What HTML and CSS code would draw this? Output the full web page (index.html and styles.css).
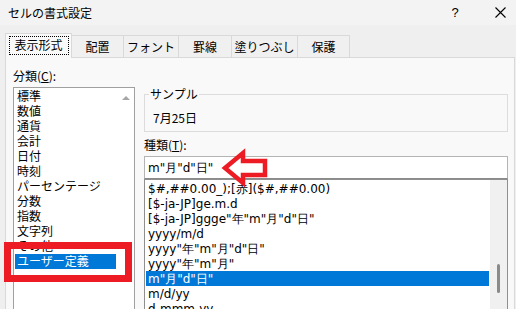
FILE: index.html
```html
<!DOCTYPE html>
<html>
<head>
<meta charset="utf-8">
<title>Format Cells</title>
<link rel="stylesheet" href="styles.css">
</head>
<body>
<div class="dialog">
  <div class="titlebar">
    <span class="title">セルの書式設定</span>
    <div class="caption-buttons">
      <span class="cap-btn help">?</span>
      <span class="cap-btn close">
        <svg width="11" height="11" viewBox="0 0 11 11"><path d="M0.5 0.5 L10.5 10.5 M10.5 0.5 L0.5 10.5" stroke="#000" stroke-width="1.1" fill="none"/></svg>
      </span>
    </div>
  </div>

  <div class="tabs">
    <div class="tab tab-1 selected"><span class="focus">表示形式</span></div>
    <div class="tab tab-2">配置</div>
    <div class="tab tab-3">フォント</div>
    <div class="tab tab-4">罫線</div>
    <div class="tab tab-5">塗りつぶし</div>
    <div class="tab tab-6">保護</div>
  </div>

  <div class="panel">
    <div class="col-left">
      <div class="label">分類(<u>C</u>):</div>
      <div class="listbox category">
        <div class="items">
          <div class="item">標準</div>
          <div class="item">数値</div>
          <div class="item">通貨</div>
          <div class="item">会計</div>
          <div class="item">日付</div>
          <div class="item">時刻</div>
          <div class="item">パーセンテージ</div>
          <div class="item">分数</div>
          <div class="item">指数</div>
          <div class="item">文字列</div>
          <div class="item">その他</div>
          <div class="item sel">ユーザー定義</div>
        </div>
        <div class="vscroll plain"><span class="arrow-up"></span></div>
      </div>
    </div>

    <div class="col-right">
      <fieldset class="sample">
        <legend>サンプル</legend>
        <div class="sample-value">7月25日</div>
      </fieldset>
      <div class="label type-label">種類(<u>T</u>):</div>
      <div class="input">m"月"d"日"</div>
      <div class="listbox formats">
        <div class="items">
          <div class="item fmt">$#,##0.00_);[赤]($#,##0.00)</div>
          <div class="item fmt">[$-ja-JP]ge.m.d</div>
          <div class="item fmt">[$-ja-JP]ggge"年"m"月"d"日"</div>
          <div class="item fmt">yyyy/m/d</div>
          <div class="item fmt">yyyy"年"m"月"d"日"</div>
          <div class="item fmt">yyyy"年"m"月"</div>
          <div class="item fmt sel">m"月"d"日"</div>
          <div class="item fmt">m/d/yy</div>
          <div class="item fmt">d-mmm-yy</div>
        </div>
        <div class="vscroll track"><span class="thumb"></span></div>
      </div>
    </div>
  </div>

  <div class="callout-box"></div>
  <svg class="callout-arrow" width="56" height="42" viewBox="0 0 56 42">
    <polygon points="7,20 25,5 25,13 47,13 47,27 25,27 25,35" fill="none" stroke="#ed1c24" stroke-width="4.5" stroke-linejoin="miter"/>
  </svg>
</div>
</body>
</html>
```

FILE: styles.css
```css
html, body {
  margin: 0;
  padding: 0;
}

body {
  width: 516px;
  height: 309px;
  overflow: hidden;
  background: #efefef;
  font-size: 12px;
  color: #000;
}

.dialog {
  position: relative;
  width: 516px;
  height: 309px;
  overflow: hidden;
  font-family: "Noto Sans CJK JP", sans-serif;
  font-size: 12px;
}

.dialog div, .dialog span, .dialog fieldset, .dialog legend {
  box-sizing: border-box;
}

.titlebar {
  height: 25px;
  display: flex;
  align-items: center;
  padding-left: 8px;
  padding-right: 6px;
  background: #f3f3f3;
}

.title {
  line-height: 14px;
}

.caption-buttons {
  margin-left: auto;
  display: flex;
  align-items: center;
  gap: 25px;
}

.cap-btn {
  width: 20px;
  height: 20px;
  display: flex;
  align-items: center;
  justify-content: center;
}

.help {
  font-family: "Liberation Sans", sans-serif;
  font-size: 13px;
}

.tabs {
  margin-top: 8px;
  padding-left: 5px;
  height: 24px;
  display: flex;
  align-items: flex-end;
}

.tab {
  height: 22px;
  border: 1px solid #d9d9d9;
  border-left: none;
  border-bottom: none;
  background: #f0f0f0;
  display: flex;
  align-items: center;
  justify-content: center;
  line-height: 14px;
  padding-top: 1px;
}

.tab-1 { width: 67px; border-left: 1px solid #d9d9d9; }
.tab-2 { width: 52px; }
.tab-3 { width: 55px; }
.tab-4 { width: 53px; }
.tab-5 { width: 66px; }
.tab-6 { width: 52px; }

.tab.selected {
  height: 25px;
  margin-bottom: -1px;
  background: #f9f9f9;
  position: relative;
  z-index: 1;
  padding-top: 0;
}

.focus {
  display: flex;
  align-items: center;
  justify-content: center;
  width: 60px;
  height: 19px;
  border: 1px dotted #000;
  margin-top: -2px;
}

.panel {
  margin-left: 5px;
  width: 510px;
  height: 252px;
  border: 1px solid #d9d9d9;
  border-bottom: none;
  background: #f9f9f9;
  display: flex;
  gap: 9px;
  padding-left: 7px;
}

.col-left {
  width: 122px;
  padding-top: 11px;
}

.label {
  height: 14px;
  line-height: 14px;
  margin-bottom: 4px;
}

.label u { text-underline-offset: 1px; }

.listbox {
  background: #fff;
  display: flex;
}

.listbox.category {
  width: 122px;
  height: 224px;
  border: 1px solid #a0a0a0;
  border-bottom: none;
}

.items {
  padding: 1px;
  flex: 1;
  min-width: 0;
}

.item {
  height: 15px;
  line-height: 17px;
  padding-left: 2px;
  white-space: nowrap;
  font-family: "DejaVu Sans", "Noto Sans CJK JP", sans-serif;
}

.item.fmt {
  font-family: "DejaVu Sans", sans-serif;
}

.item.sel {
  background: #0078d7;
  color: #fff;
}

.vscroll {
  width: 17px;
  flex: none;
  display: flex;
  flex-direction: column;
}

.vscroll.plain {
  align-items: center;
}

.arrow-up {
  width: 0;
  height: 0;
  margin-top: 8px;
  border-left: 4px solid transparent;
  border-right: 4px solid transparent;
  border-bottom: 4px solid #a6a6a6;
}

.col-right {
  width: 364px;
  margin-top: 29px;
}

.sample {
  margin: 0;
  min-width: 0;
  padding: 0 0 6px 8px;
  border: 1px solid #dcdcdc;
}

.sample legend {
  padding: 0 1px;
  margin-left: -4px;
  line-height: 14px;
}

.sample-value {
  padding-top: 10px;
  line-height: 14px;
}

.type-label {
  margin-top: 6px;
}

.input {
  height: 23px;
  border: 1px solid #b4b4b4;
  border-bottom-color: #8a8a8a;
  background: #fff;
  padding-left: 3px;
  line-height: 22px;
  font-family: "DejaVu Sans", sans-serif;
}

.listbox.formats {
  width: 364px;
  height: 137px;
  border: 1px solid #8f8f8f;
  border-bottom: none;
}

.vscroll.track {
  background: #f0f0f0;
}

.thumb {
  width: 3px;
  height: 29px;
  margin-top: 84px;
  margin-left: 7px;
  background: #8a8a8a;
  border-radius: 2px;
}

.callout-box {
  position: absolute;
  left: 4px;
  top: 242px;
  width: 128px;
  height: 40px;
  box-sizing: border-box;
  border: 7px solid #ed1c24;
}

.callout-arrow {
  position: absolute;
  left: 218px;
  top: 148px;
}
```
